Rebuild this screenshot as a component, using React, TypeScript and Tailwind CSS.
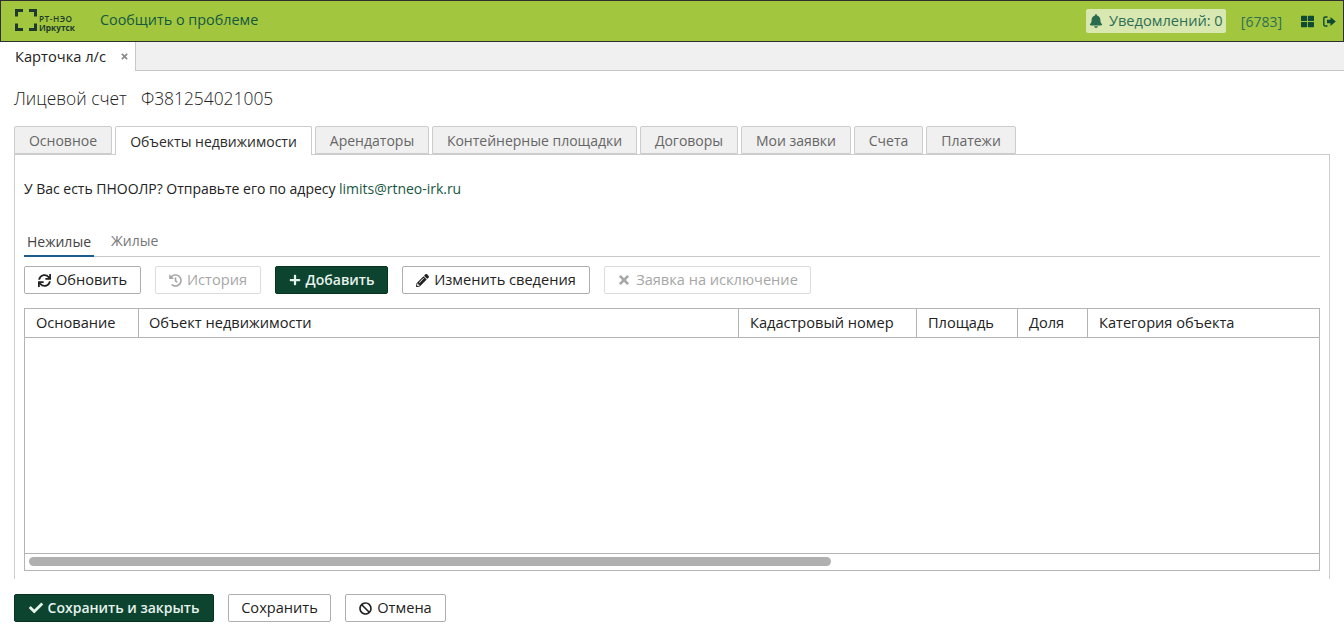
import React from "react";
import { FaSync, FaHistory, FaPlus, FaPencilAlt, FaTimes, FaCheck, FaBan, FaBell, FaThLarge } from "react-icons/fa";

const tabs = ["Основное", "Объекты недвижимости", "Арендаторы", "Контейнерные площадки", "Договоры", "Мои заявки", "Счета", "Платежи"];
const tabW = ["w-[98px]", "w-[197px]", "w-[114px]", "w-[205px]", "w-[98px]", "w-[110px]", "w-[69px]", "w-[90px]"];
const cols: [string, string, string][] = [
  ["Основание", "w-[114px]", "pl-[11px]"],
  ["Объект недвижимости", "w-[600px]", "pl-[10px]"],
  ["Кадастровый номер", "w-[178px]", "pl-[11px]"],
  ["Площадь", "w-[101px]", "pl-[11px]"],
  ["Доля", "w-[70px]", "pl-[11px]"],
  ["Категория объекта", "flex-1", "pl-[11px]"],
];

function Logo() {
  return (
    <div className="flex items-start -mt-[3px] -ml-[1px]">
      <svg width="24" height="24" viewBox="0 0 24 24" fill="none" stroke="#1f3a2c" strokeWidth="3">
        <path d="M9 2.500H2.500V8.500" />
        <path d="M15 2.500H21.500V8.500" />
        <path d="M2.500 15.500V21.500H9" />
        <path d="M21.500 15.500V21.500H15" />
      </svg>
      <div className="flex flex-col text-[#1d3a2c] font-bold text-[8.3px] leading-[9px] ml-[1px] mt-[6px]">
        <span className="font-semibold tracking-[0.5px]">РТ-НЭО</span>
        <span>Иркутск</span>
      </div>
    </div>
  );
}

function SignOut() {
  return (
    <svg width="13" height="11" viewBox="0 0 13 11" fill="#0f4a33">
      <path d="M4.500 1H2.300C1.300 1 .8 1.500.8 2.300V8.700C.8 9.500 1.300 10 2.300 10H4.500" fill="none" stroke="#0f4a33" strokeWidth="1.400" />
      <path d="M4 3.700H7.500V1L12.800 5.500L7.500 10V7.300H4Z" />
    </svg>
  );
}

function Btn({ icon, children, kind = "default", className = "" }: { icon?: React.ReactNode; children: React.ReactNode; kind?: "default" | "primary" | "disabled"; className?: string }) {
  const k =
    kind === "primary"
      ? "bg-[#0c4430] border-[#08331f] text-[#e6f2ec] font-semibold text-[14px] [&>span]:-mt-[2px]"
      : kind === "disabled"
        ? "bg-white border-[#dcdcdc] text-[#a6a6a6] text-[14.6px] [&>span]:-mt-[1px]"
        : "bg-white border-[#aeaeae] text-[#222] text-[14.6px] [&>span]:-mt-[1px]";
  return (
    <div className={`h-[28px] flex items-center justify-center gap-[5px] border rounded-[2px] ${k} ${className}`}>
      {icon}
      <span>{children}</span>
    </div>
  );
}

export default function App() {
  return (
    <div className="w-[1344px] h-[636px] overflow-hidden bg-white flex flex-col text-[14px] text-[#222] font-['Open_Sans',sans-serif]">
      <header className="h-[42px] shrink-0 bg-[#a2c73f] border border-[#2e2e2e] flex items-center pl-[14px] pr-[7px]">
        <Logo />
        <span className="ml-[25px] text-[#14573f] text-[14.4px] mb-[3px]">Сообщить о проблеме</span>
        <div className="ml-auto flex items-center">
          <div className="h-[24px] w-[140px] rounded-[2px] bg-[#d9e8b1] flex items-center justify-center gap-[6px] text-[#2f6e55] text-[14.6px]">
            <FaBell size={14} className="text-[#2a6b4d]" />
            <span className="-mt-[1px]">Уведомлений: 0</span>
          </div>
          <span className="ml-[15px] text-[#2f6e55] text-[14px]">[6783]</span>
          <FaThLarge size={13} className="ml-[19px] text-[#0f4a33]" />
          <span className="ml-[9px] flex"><SignOut /></span>
        </div>
      </header>

      <div className="h-[29px] shrink-0 bg-[#f0f0f0] border-b border-[#c8c8c8] flex">
        <div className="w-[136px] h-[29px] bg-white border-r border-[#c8c8c8] flex items-center pl-[15px] pb-[2px] text-[#222] text-[14.67px]">
          <span>Карточка л/с</span>
          <FaTimes size={9} className="ml-[14px] mt-[2px] text-[#8a8a8a]" />
        </div>
      </div>

      <div className="px-[14px] flex-1 flex flex-col min-h-0">
        <div className="h-[55px] shrink-0 flex items-center text-[17.4px] font-light text-[#222] gap-[14px]">
          <span>Лицевой счет</span>
          <span>Ф381254021005</span>
        </div>

        <div className="flex gap-[3px] h-[29px] shrink-0 relative z-10">
          {tabs.map((t, i) => (
            <div
              key={t}
              className={`${tabW[i]} rounded-t-[2px] border border-[#cccccc] flex items-center justify-center ${i === 1 ? "h-[29px] bg-white border-b-0 text-[#2b2b2b]" : "h-[28px] bg-[#f0f0f0] text-[#666]"}`}
            >
              {t}
            </div>
          ))}
        </div>

        <div className="h-[425px] shrink-0 -mt-[1px] border-x border-t border-[#cccccc] px-[9px] flex flex-col">
          <div className="h-[68px] shrink-0 pt-[24px] leading-[19px] text-[#222] tracking-[-0.02px]">
            У Вас есть ПНООЛР? Отправьте его по адресу <span className="text-[#17573f]">limits@rtneo-irk.ru</span>
          </div>

          <div className="h-[34px] shrink-0 border-b border-[#c8c8c8] flex items-end">
            <div className="w-[70px] h-[26px] -mb-[1px] border-b-2 border-[#1d5c8c] text-center text-[#444]">Нежилые</div>
            <div className="ml-[17px] h-[26px] text-[#777]">Жилые</div>
          </div>

          <div className="flex mt-[9px] shrink-0">
            <Btn icon={<FaSync size={13} />} className="w-[117px]">Обновить</Btn>
            <Btn icon={<FaHistory size={13} />} kind="disabled" className="w-[106px] ml-[14px]">История</Btn>
            <Btn icon={<FaPlus size={12} />} kind="primary" className="w-[113px] ml-[14px]">Добавить</Btn>
            <Btn icon={<FaPencilAlt size={13} />} className="w-[188px] ml-[14px]">Изменить сведения</Btn>
            <Btn icon={<FaTimes size={14} />} kind="disabled" className="w-[207px] ml-[14px]">Заявка на исключение</Btn>
          </div>

          <div className="mt-[14px] h-[263px] shrink-0 border border-[#b4b4b4] flex flex-col">
            <div className="h-[29px] shrink-0 flex border-b border-[#b4b4b4]">
              {cols.map(([c, w, p], i) => (
                <div key={c} className={`${w} ${p} shrink-0 h-full flex items-center text-[#222] text-[14.6px] ${i < 5 ? "border-r border-[#b4b4b4]" : ""}`}>
                  <span className="-mt-[1px]">{c}</span>
                </div>
              ))}
            </div>
            <div className="flex-1" />
            <div className="h-[17px] shrink-0 border-t border-[#b4b4b4] px-[4px] pt-[3px]">
              <div className="w-[802px] h-[9px] rounded-full bg-[#b0b0b0]" />
            </div>
          </div>
        </div>

        <div className="flex mt-[15px] shrink-0">
          <Btn icon={<FaCheck size={14} />} kind="primary" className="w-[200px]">Сохранить и закрыть</Btn>
          <Btn className="w-[103px] ml-[14px]">Сохранить</Btn>
          <Btn icon={<FaBan size={13} />} className="w-[101px] ml-[14px]">Отмена</Btn>
        </div>
      </div>
    </div>
  );
}
